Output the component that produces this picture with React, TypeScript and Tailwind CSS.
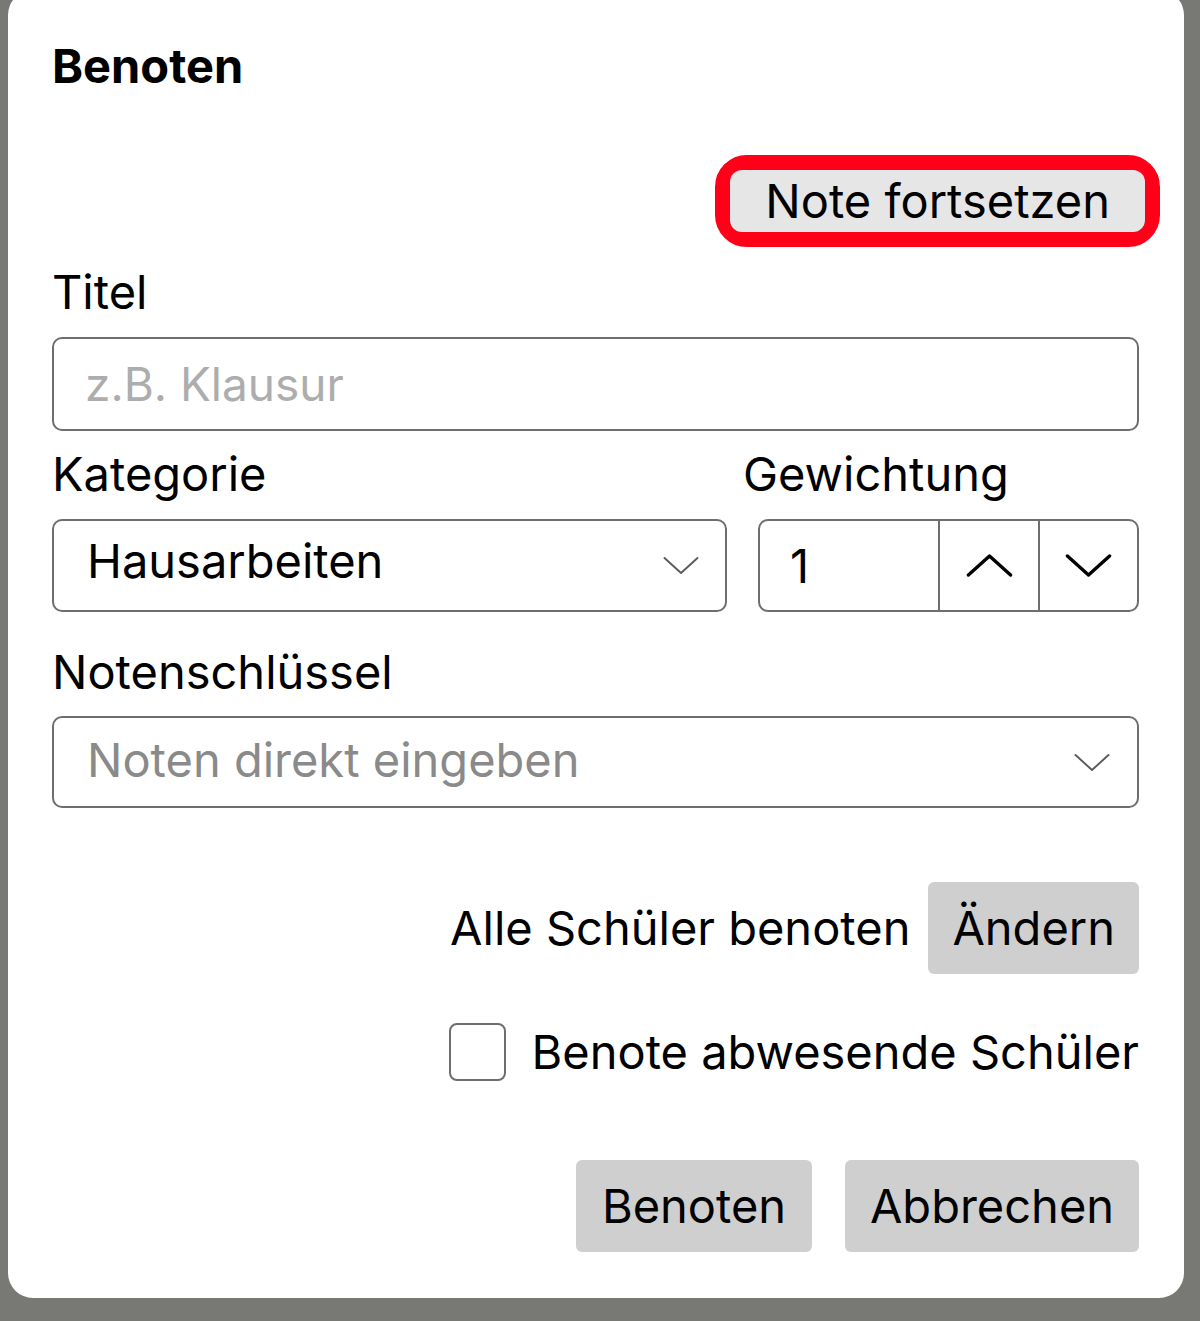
import React from "react";

const font = { fontFamily: "Inter, 'Noto Sans', sans-serif" };

function Chevron({ up = false, className = "" }: { up?: boolean; className?: string }) {
  return (
    <svg viewBox="0 0 48 24" className={className} fill="none" strokeLinecap="round" strokeLinejoin="round">
      <path d={up ? "M2 22 L24 2 L46 22" : "M2 2 L24 22 L46 2"} />
    </svg>
  );
}

export default function App() {
  return (
    <div className="min-h-[1321px] w-[1200px] overflow-hidden bg-[#787875]" style={font}>
      <div className="-mt-[10px] ml-[8px] flex h-[1308px] w-[1176px] flex-col rounded-[25px] bg-white pl-[44px] pr-[45px] pt-[48px] text-[47px] leading-[56px] text-black">
        <h1 className="font-bold">Benoten</h1>

        <div className="mt-[61px] flex justify-end">
          <div className="-mr-[21px] rounded-[32px] border-[15px] border-[#ff0019]">
            <button className="flex h-[62px] items-center rounded-[12px] bg-[#e6e6e6] px-[35px]">
              Note fortsetzen
            </button>
          </div>
        </div>

        <label className="mt-[17px]">Titel</label>
        <div className="mt-[17px] flex h-[94px] items-center rounded-[10px] border-2 border-[#6e6e6e] px-[31px]">
          <span className="text-[46px] text-[#adadad]">z.B. Klausur</span>
        </div>

        <div className="mt-[15px] flex">
          <label className="w-[691px]">Kategorie</label>
          <label>Gewichtung</label>
        </div>

        <div className="mt-[17px] flex gap-[31px]">
          <div className="flex h-[93px] w-[675px] items-center justify-between rounded-[10px] border-2 border-[#6e6e6e] pl-[33px] pr-[26px]">
            <span className="mb-[10px]">Hausarbeiten</span>
            <Chevron className="h-[19px] w-[36px] stroke-[#5a5a5a] [stroke-width:2.5]" />
          </div>
          <div className="flex h-[93px] flex-1 rounded-[10px] border-2 border-[#6e6e6e]">
            <div className="flex w-[178px] items-center pl-[30px]">1</div>
            <div className="flex w-[100px] items-center justify-center border-l-2 border-[#6e6e6e]">
              <Chevron up className="h-[23px] w-[47px] stroke-black [stroke-width:3.5]" />
            </div>
            <div className="flex flex-1 items-center justify-center border-l-2 border-[#6e6e6e]">
              <Chevron className="h-[23px] w-[47px] stroke-black [stroke-width:3.5]" />
            </div>
          </div>
        </div>

        <label className="mt-[32px]">Notenschlüssel</label>
        <div className="mt-[16px] flex h-[92px] items-center justify-between rounded-[10px] border-2 border-[#6e6e6e] pl-[33px] pr-[27px]">
          <span className="mb-[4px] text-[#8a8a8a]">Noten direkt eingeben</span>
          <Chevron className="h-[19px] w-[36px] stroke-[#5a5a5a] [stroke-width:2.5]" />
        </div>

        <div className="mt-[74px] flex items-center justify-end gap-[18px]">
          <span>Alle Schüler benoten</span>
          <button className="h-[92px] rounded-[6px] bg-[#cfcfcf] px-[24px]">Ändern</button>
        </div>

        <div className="mt-[49px] flex items-center justify-end gap-[26px]">
          <span className="h-[58px] w-[57px] rounded-[8px] border-2 border-[#6e6e6e] bg-white" />
          <span>Benote abwesende Schüler</span>
        </div>

        <div className="mt-[79px] flex justify-end gap-[33px]">
          <button className="h-[92px] w-[236px] rounded-[6px] bg-[#cfcfcf]">Benoten</button>
          <button className="h-[92px] w-[294px] rounded-[6px] bg-[#cfcfcf]">Abbrechen</button>
        </div>
      </div>
    </div>
  );
}
